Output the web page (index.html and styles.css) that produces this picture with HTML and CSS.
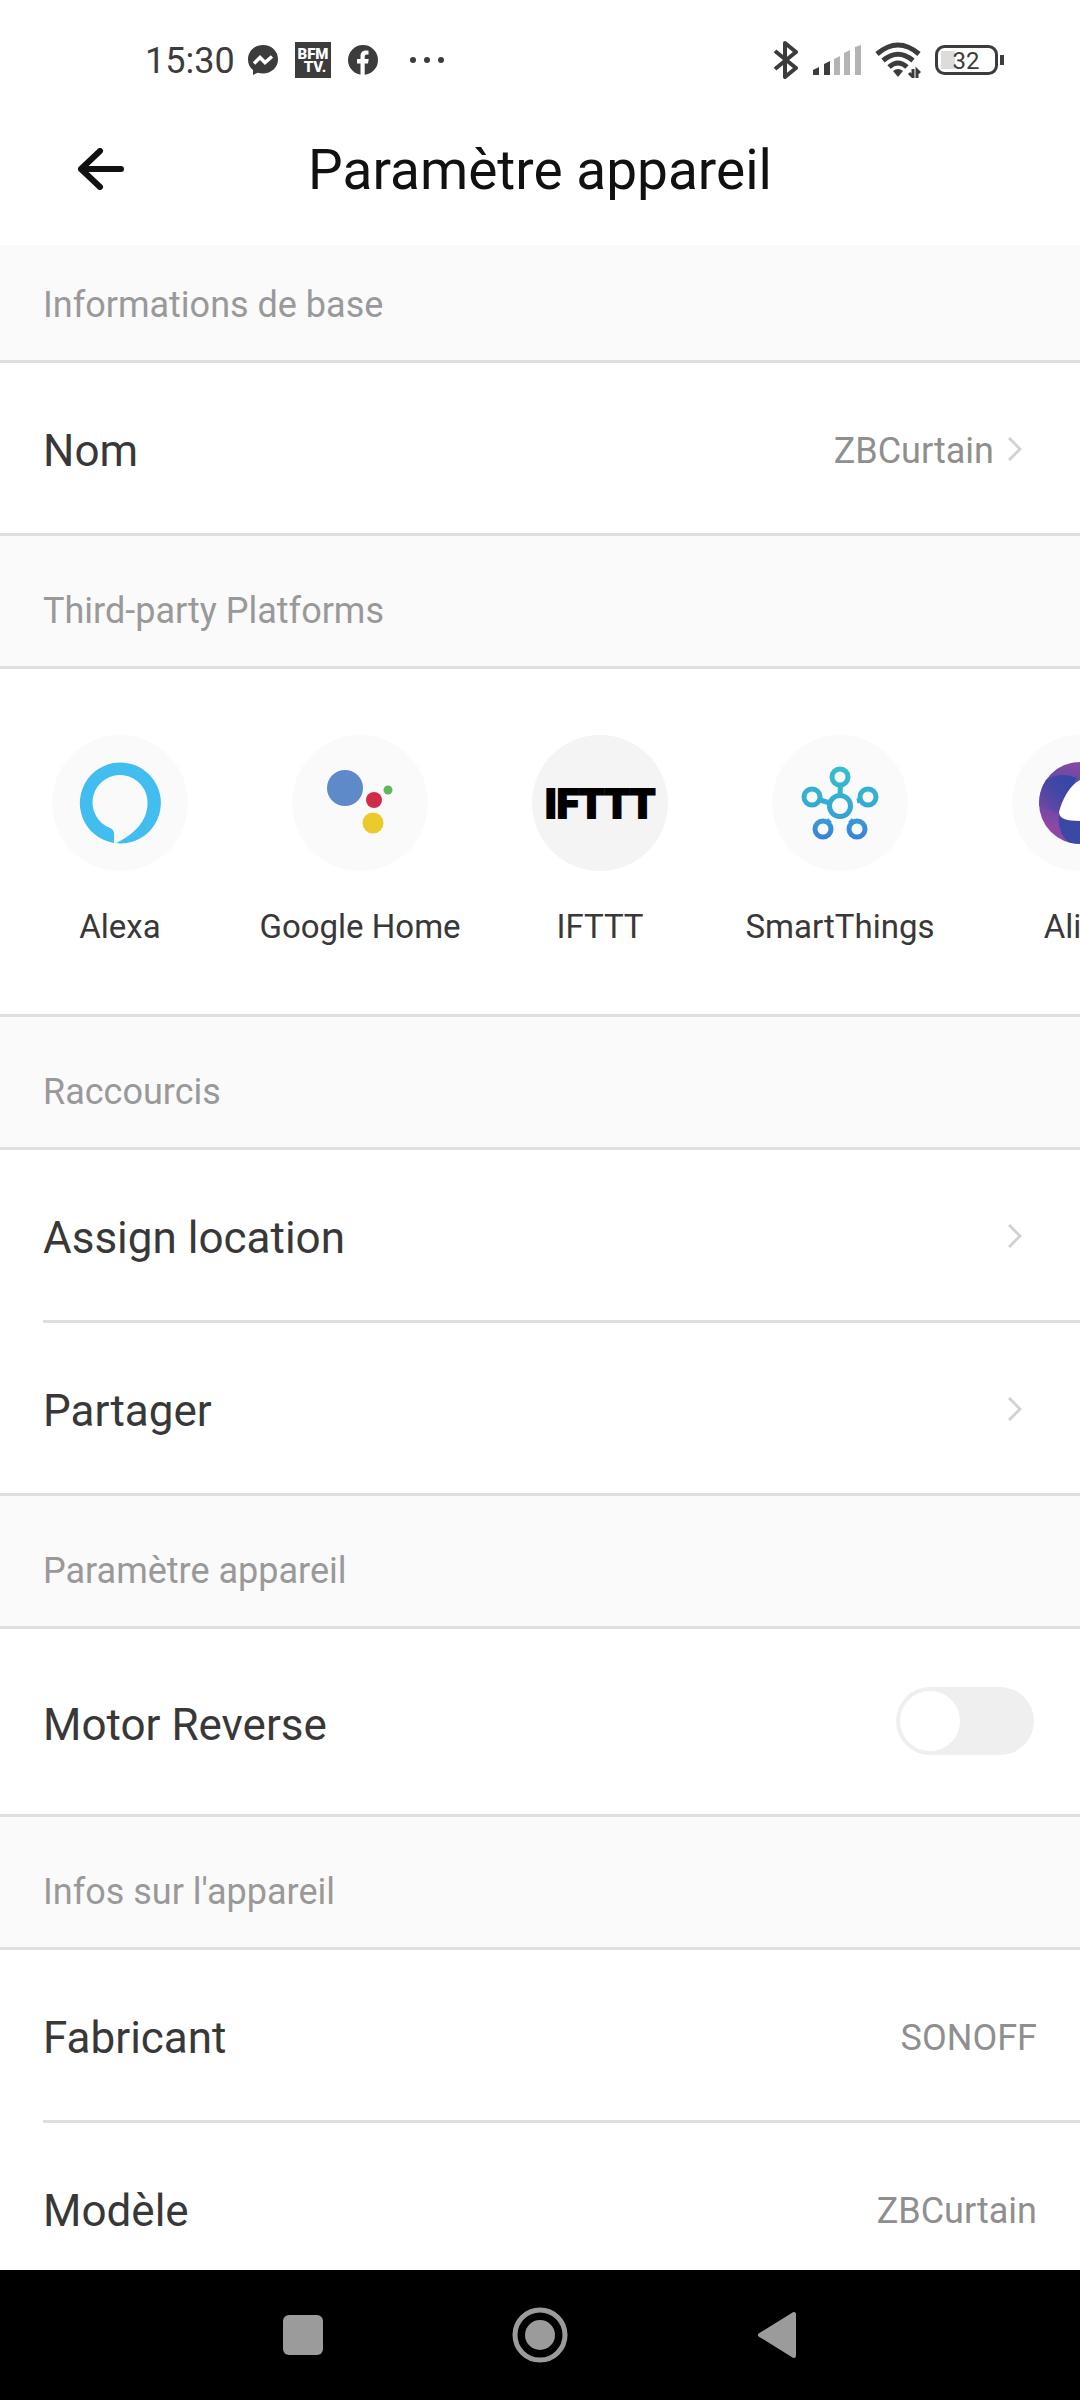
FILE: index.html
```html
<!DOCTYPE html>
<html lang="fr">
<head>
    <meta charset="UTF-8">
    <meta name="viewport" content="width=device-width, initial-scale=1.0">
    <title>Paramètre appareil</title>
    <link rel="stylesheet" href="styles.css">
</head>
<body>
    <div class="status-bar">
        <div class="status-left">
            <span class="clock">15:30</span>
            <svg width="30" height="30" viewBox="0 0 30 30">
                <path fill="#3c3c3c" d="M15 0C6.600 0 0 6.200 0 14.500c0 4.400 1.800 8 5 10.600V30l4.600-2.300c1.700.5 3.500.8 5.400.8 8.400 0 15-6 15-14.200S23.400 0 15 0z"/>
                <path fill="none" stroke="#fff" stroke-width="3.500" d="M6 18.500l6-6 5 5 7-6"/>
            </svg>
            <svg width="36" height="36" viewBox="0 0 36 36">
                <rect width="36" height="36" fill="#3c3c3c"/>
                <text class="bfm-txt" x="18" y="17">BFM</text>
                <text class="bfm-txt" x="20" y="30">TV.</text>
            </svg>
            <svg width="30" height="30" viewBox="0 0 30 30">
                <circle cx="15" cy="15" r="15" fill="#3c3c3c"/>
                <path fill="#fff" d="M12.500 30V18.500H9V14h3.500v-2.500c0-4 2-6 5.500-6 1.200 0 2.500.2 2.500.2v3.800h-1.700c-1.600 0-2.100 1-2.100 2V14h4l-.7 4.500h-3.300V30z"/>
            </svg>
            <svg class="dots-ico" width="34" height="6" viewBox="0 0 34 6">
                <circle cx="3" cy="3" r="3"/><circle cx="17" cy="3" r="3"/><circle cx="31" cy="3" r="3"/>
            </svg>
        </div>
        <div class="status-right">
            <svg width="26" height="38" viewBox="0 0 26 38">
                <path fill="none" stroke="#3c3c3c" stroke-width="4" stroke-linejoin="round" d="M2 10l21 17-11 9V2l11 9L2 28"/>
            </svg>
            <svg width="48" height="30" viewBox="0 0 48 30">
                <path fill="#3c3c3c" d="M0 25l6-3v8H0zM11 19l6-3v14h-6z"/>
                <path fill="#b4b4b4" d="M21 14l6-3v19h-6zM31 8l6-3v25h-6zM42 2l6-2v30h-6z"/>
            </svg>
            <svg width="46" height="36" viewBox="0 0 46 36">
                <g fill="none" stroke="#3c3c3c" stroke-width="5">
                    <path d="M2 12Q23-6 44 12"/>
                    <path d="M8 18.500Q23 6 38 18.500"/>
                    <path d="M14 25Q23 17 32 25"/>
                </g>
                <path fill="#3c3c3c" d="M18 29q5-4 10 0l-5 6z"/>
                <path fill="none" stroke="#3c3c3c" stroke-width="3" d="M38 27v8l-4-4M42 36v-8l3 3"/>
            </svg>
            <svg width="70" height="30" viewBox="0 0 70 30">
                <rect x="6" y="6" width="14" height="18" fill="#dcdcdc"/>
                <rect x="1.500" y="1.500" width="60" height="27" rx="8" fill="none" stroke="#3c3c3c" stroke-width="3"/>
                <rect x="65" y="10" width="4" height="10" fill="#3c3c3c"/>
                <text class="battery-txt" x="31" y="24">32</text>
            </svg>
        </div>
    </div>

    <header class="app-bar">
        <button class="back-btn" aria-label="Retour">
            <svg width="46" height="42" viewBox="0 0 46 42">
                <path fill="none" stroke="#111" stroke-width="6" stroke-linecap="round" stroke-linejoin="round" d="M22 3L3 21l19 18M3 21h40"/>
            </svg>
        </button>
        <h1>Paramètre appareil</h1>
    </header>

    <main class="content">
        <h2 class="section-title">Informations de base</h2>
        <a class="row" href="#">
            <span class="row-lbl">Nom</span>
            <span class="row-val">ZBCurtain</span>
            <svg class="chevron" width="14" height="24" viewBox="0 0 14 24"><path d="M1 1l11 11L1 23"/></svg>
        </a>

        <h2 class="section-title">Third-party Platforms</h2>
        <div class="platforms">
            <a class="platform" href="#">
                <svg width="138" height="138" viewBox="0 0 138 138">
                    <circle cx="69" cy="69" r="68" fill="#fafafa"/>
                    <path fill="#41bdef" d="M63 109A40.500 40.500 0 1 1 69 109.500L65 109C82 101 96.500 88 96.500 69A27.500 27.500 0 1 0 60 94.500Q63 96 63 100z"/>
                </svg>
                <span>Alexa</span>
            </a>
            <a class="platform" href="#">
                <svg width="138" height="138" viewBox="0 0 138 138">
                    <circle cx="69" cy="69" r="68" fill="#fafafa"/>
                    <circle cx="54" cy="54" r="18" fill="#5f8aca"/>
                    <circle cx="83" cy="66" r="8" fill="#d02c48"/>
                    <circle cx="97" cy="56" r="4.500" fill="#5cb85c"/>
                    <circle cx="82" cy="89" r="10.500" fill="#eacb2b"/>
                </svg>
                <span>Google Home</span>
            </a>
            <a class="platform" href="#">
                <svg width="138" height="138" viewBox="0 0 138 138">
                    <circle cx="69" cy="69" r="68" fill="#f4f4f4"/>
                    <text class="ifttt-txt" x="69" y="84">IFTTT</text>
                </svg>
                <span>IFTTT</span>
            </a>
            <a class="platform" href="#">
                <svg width="138" height="138" viewBox="0 0 138 138">
                    <defs>
                        <linearGradient id="stGrad" gradientUnits="userSpaceOnUse" x1="0" y1="33" x2="0" y2="105">
                            <stop offset="0" stop-color="#33bfcf"/>
                            <stop offset="0.600" stop-color="#35a8d4"/>
                            <stop offset="1" stop-color="#3b80d8"/>
                        </linearGradient>
                    </defs>
                    <circle cx="69" cy="69" r="68" fill="#fafafa"/>
                    <g fill="none" stroke="url(#stGrad)" stroke-width="5">
                        <circle cx="69" cy="72" r="10.500"/>
                        <circle cx="69" cy="43" r="8"/>
                        <circle cx="41" cy="63" r="8"/>
                        <circle cx="97" cy="63" r="8"/>
                        <circle cx="52" cy="95" r="8"/>
                        <circle cx="86" cy="95" r="8"/>
                        <path d="M69.500 51L69 61M49 66l10 3M90 66l-4 1M57 88l2-2M81 88l-2-2"/>
                    </g>
                </svg>
                <span>SmartThings</span>
            </a>
            <a class="platform" href="#">
                <svg width="138" height="138" viewBox="0 0 138 138">
                    <defs>
                        <linearGradient id="aliceGrad" x1="0.600" y1="0" x2="0.300" y2="1">
                            <stop offset="0" stop-color="#8a4aa0"/>
                            <stop offset="0.150" stop-color="#7a4aa4"/>
                            <stop offset="0.450" stop-color="#5a48a6"/>
                            <stop offset="0.850" stop-color="#8e48a4"/>
                        </linearGradient>
                        <linearGradient id="aliceFold" x1="1" y1="0" x2="0" y2="1">
                            <stop offset="0" stop-color="#2f48a4"/>
                            <stop offset="0.500" stop-color="#4447a5"/>
                            <stop offset="1" stop-color="#7a48a4"/>
                        </linearGradient>
                    </defs>
                    <circle cx="69" cy="69" r="68" fill="#fafafa"/>
                    <circle cx="69" cy="69" r="41" fill="url(#aliceGrad)"/>
                    <path fill="url(#aliceFold)" d="M35 46Q50 37 66 44L48 80L28 72Q28 56 35 46z"/>
                    <path fill="#3a48a6" d="M48 80Q46 98 57 108Q63 110 69 110V80z"/>
                    <path fill="#fff" d="M69 46C58 52 51 66 48 78C48 84 54 87 69 87z"/>
                </svg>
                <span>Alice</span>
            </a>
        </div>

        <h2 class="section-title">Raccourcis</h2>
        <a class="row" href="#">
            <span class="row-lbl">Assign location</span>
            <svg class="chevron" width="14" height="24" viewBox="0 0 14 24"><path d="M1 1l11 11L1 23"/></svg>
        </a>
        <hr class="divider">
        <a class="row" href="#">
            <span class="row-lbl">Partager</span>
            <svg class="chevron" width="14" height="24" viewBox="0 0 14 24"><path d="M1 1l11 11L1 23"/></svg>
        </a>

        <h2 class="section-title">Paramètre appareil</h2>
        <div class="row row-switch">
            <label class="row-lbl" for="motorReverse">Motor Reverse</label>
            <input id="motorReverse" class="switch" type="checkbox">
        </div>

        <h2 class="section-title">Infos sur l'appareil</h2>
        <div class="row">
            <span class="row-lbl">Fabricant</span>
            <span class="row-val">SONOFF</span>
        </div>
        <hr class="divider">
        <div class="row">
            <span class="row-lbl">Modèle</span>
            <span class="row-val">ZBCurtain</span>
        </div>
    </main>

    <nav class="nav-bar">
        <button aria-label="Applications récentes">
            <svg width="56" height="56" viewBox="0 0 56 56"><rect x="8" y="8" width="40" height="40" rx="6" fill="#9b9b9b"/></svg>
        </button>
        <button aria-label="Accueil">
            <svg width="56" height="56" viewBox="0 0 56 56">
                <circle cx="28" cy="28" r="25" fill="none" stroke="#9b9b9b" stroke-width="5"/>
                <circle cx="28" cy="28" r="15" fill="#9b9b9b"/>
            </svg>
        </button>
        <button aria-label="Précédent">
            <svg width="56" height="56" viewBox="0 0 56 56"><path fill="#9b9b9b" stroke="#9b9b9b" stroke-width="4" stroke-linejoin="round" d="M45 7v42L11 28z"/></svg>
        </button>
    </nav>
</body>
</html>
```
FILE: styles.css
```css
*, *:before, *:after {
    margin: 0;
    padding: 0;
    box-sizing: border-box;
}
body {
    display: flex;
    flex-direction: column;
    height: 100vh;
    background: #fff;
    color: #383838;
    font-family: Roboto, "Liberation Sans", sans-serif;
}
a {
    color: inherit;
    text-decoration: none;
}
button {
    background: transparent;
    border: 0;
    cursor: pointer;
}
svg {
    display: block;
    flex-shrink: 0;
}

/* status bar */
.status-bar {
    display: flex;
    flex-shrink: 0;
    justify-content: space-between;
    height: 120px;
    padding: 0 75px 0 145px;
}
.status-left, .status-right {
    display: flex;
    align-items: center;
}
.status-left {
    gap: 17px;
}
.status-right {
    gap: 14px;
}
.clock {
    margin-right: -4px;
    padding-top: 2px;
    font-size: 36px;
    line-height: 42px;
    color: #3c3c3c;
}
.dots-ico {
    margin-left: 15px;
    fill: #3c3c3c;
}
.bfm-txt {
    fill: #fff;
    font-size: 15px;
    font-weight: 900;
    text-anchor: middle;
}
.battery-txt {
    fill: #3c3c3c;
    font-size: 24px;
    text-anchor: middle;
}

/* app bar */
.app-bar {
    display: grid;
    grid-template-columns: 132px 1fr 132px;
    flex-shrink: 0;
    align-items: center;
    padding-bottom: 27px;
}
.back-btn {
    height: 98px;
    padding-left: 78px;
}
.app-bar h1 {
    padding-top: 2px;
    font-size: 55px;
    line-height: 96px;
    font-weight: normal;
    text-align: center;
    color: #111;
}

/* settings list */
.content {
    flex: 1;
    min-height: 0;
    overflow-y: auto;
    scrollbar-width: none;
}
.section-title {
    padding: 54px 43px 34px;
    border-top: 3px solid #dfdfdf;
    border-bottom: 3px solid #dfdfdf;
    background: #fafafa;
    color: #999;
    font-size: 36px;
    line-height: 42px;
    font-weight: normal;
}
.section-title:first-child {
    padding-top: 39px;
    border-top: 0;
}
.row {
    display: flex;
    align-items: center;
    height: 170px;
    padding: 6px 43px 0;
}
.row-switch {
    height: 185px;
    padding-right: 46px;
}
.row-lbl {
    flex: 1;
    font-size: 44px;
}
.row-val {
    font-size: 36px;
    color: #8f8f8f;
}
.chevron {
    margin: 0 15px 4px 14px;
    fill: none;
    stroke: #d2d2d2;
    stroke-width: 3;
}
.divider {
    height: 3px;
    margin-left: 43px;
    border: 0;
    background: #dfdfdf;
}
.switch {
    width: 138px;
    height: 68px;
    margin-bottom: 8px;
    padding: 4px;
    appearance: none;
    border-radius: 34px;
    background: #efefef;
    cursor: pointer;
}
.switch:before {
    content: "";
    display: block;
    width: 60px;
    height: 60px;
    border-radius: 50%;
    background: #fff;
}
.switch:checked {
    background: #41bdef;
}
.switch:checked:before {
    margin-left: auto;
}

/* third-party platforms */
.platforms {
    display: flex;
    overflow-x: auto;
    scrollbar-width: none;
    height: 345px;
    padding-top: 65px;
}
.platform {
    display: flex;
    flex: 0 0 240px;
    flex-direction: column;
    align-items: center;
    gap: 34px;
    font-size: 33px;
    line-height: 42px;
}
.ifttt-txt {
    fill: #000;
    stroke: #000;
    stroke-width: 2;
    font-size: 40px;
    font-weight: 900;
    text-anchor: middle;
}

/* android navigation */
.nav-bar {
    display: flex;
    flex-shrink: 0;
    align-items: center;
    justify-content: center;
    gap: 181px;
    height: 130px;
    background: #000;
}
```
